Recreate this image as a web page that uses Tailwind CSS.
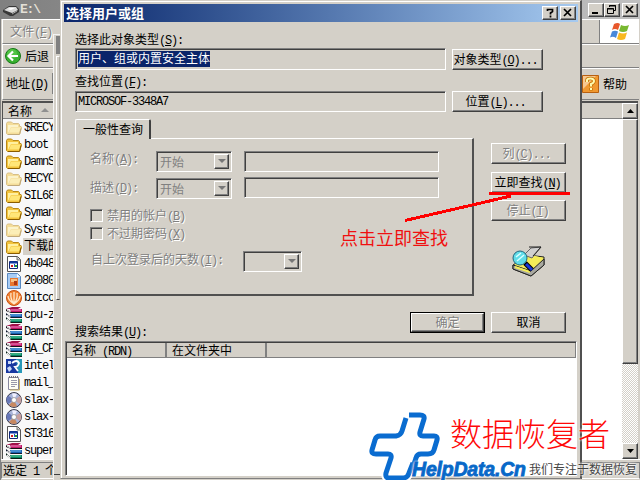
<!DOCTYPE html>
<html lang="zh-CN">
<head>
    <meta charset="UTF-8">
    <meta name="viewport" content="width=device-width, initial-scale=1.0">
    <title>选择用户或组</title>
    <script src="https://cdn.jsdelivr.net/npm/@tailwindcss/browser@4"></script>
    <style>
        body { font-family: "Noto Sans CJK SC", sans-serif; font-size: 12px; line-height: 14px; }
        /* half-width latin: 6px per character */
        i { font-family: "Liberation Mono", monospace; font-style: normal; letter-spacing: -1.2px; white-space: pre; }
        u { text-underline-offset: 1px; }
        .raised { border: 1px solid; border-color: #fff #404040 #404040 #fff; box-shadow: inset -1px -1px #808080; background: #d4d0c8; }
        .sunken { border: 1px solid; border-color: #808080 #fff #fff #808080; box-shadow: inset 1px 1px #404040; }
        .off { color: #808080; text-shadow: 1px 1px #fff; }
        /* dithered scrollbar track */
        .track { background: repeating-conic-gradient(#fff 0 25%, #d4d0c8 0 50%) 0 0 / 2px 2px; }
    </style>
</head>
<body class="w-[640px] h-[480px] overflow-hidden relative bg-[#d4d0c8] text-black">

    <!-- icon set -->
    <svg class="hidden">
        <symbol id="folder" viewBox="0 0 16 16">
            <path d="M.5 3.500 1.500 2h4L7 3.500h5.500l1 1v2H15l.5 1-1.500 6-1 1H1.500l-1-1z" fill="#f2c33c" stroke="#b88818"/>
            <path d="M2 5h10v2H5l-3 6z" fill="#fff0a0"/>
            <path d="M5 7.500h9.500l-1.500 5H3z" fill="#ffe678"/>
            <path d="M2 14.500h11.500l1.500-6" fill="none" stroke="#8a5c00"/>
        </symbol>
        <symbol id="rar" viewBox="0 0 16 16">
            <path d="M0 2 6 0h9l-3 2z" fill="#a01048"/><path d="M4 2h12v3H5z" fill="#c01868"/><path d="M5 3h10" stroke="#f08cc0"/>
            <path d="M0 2 5 5h11v1H5L0 4z" fill="#181018"/>
            <path d="M4 7h12v3H5z" fill="#1860b0"/><path d="M5 8h10" stroke="#70b8f0"/><path d="M0 6l5 4h11v1H5L0 8z" fill="#101830"/>
            <path d="M4 12h12v3H5z" fill="#088060"/><path d="M5 13h10" stroke="#60d8a0"/><path d="M0 10l5 5h11v1H5l-5-4z" fill="#082018"/>
            <path d="M1 3l3 2M1 8l3 2M1 12l3 3" stroke="#eee"/>
        </symbol>
        <symbol id="app" viewBox="0 0 16 16">
            <path d="M1.500.5h10l3 3v12h-13z" fill="#fff" stroke="#555"/><path d="M11 1v3h3" fill="#bbb" stroke="#777"/>
            <path d="M3.500 5.500h8v7h-8z" fill="#fff" stroke="#102878"/><path d="M4 6.500h7" stroke="#1038a0" stroke-width="2"/>
            <path d="M5 9h2v2H5z" fill="#d82020"/><path d="M8 8h1v3H8z" fill="#2050d0"/><path d="M9 9h2v2H9z" fill="#20a020"/>
        </symbol>
        <symbol id="disc" viewBox="0 0 16 16">
            <circle cx="8" cy="8" r="7.400" fill="#a8b4d8" stroke="#303040"/>
            <path d="M8 8 2 3.500A7 7 0 0 0 2 12z" fill="#6878b8"/><path d="M8 8 3 13a7 7 0 0 0 8 1z" fill="#c88860"/>
            <path d="M8 8 14 4a7 7 0 0 1 0 8z" fill="#c8a0a0"/><path d="M8 8 6 1.500a7 7 0 0 1 5 .5z" fill="#f0f0ff"/>
            <circle cx="8" cy="8" r="2.500" fill="#fff" stroke="#888" stroke-width=".7"/>
        </symbol>
    </svg>

    <!-- explorer window -->
    <div class="w-[640px] h-[480px] flex flex-col border-l border-[#808080]">
        <div class="h-[19px] flex items-center justify-between pl-[1px] pr-[2px] bg-linear-to-r from-[#808080] to-[#c0c0c0]">
            <div class="flex items-center text-[#e4e0d8] font-bold">
                <svg class="w-[17px] h-[14px]" viewBox="0 0 17 14"><path d="M1 7 7 3h7l3 3v3l-6 4H8L1 9z" fill="#383838"/><path d="M2 7 7 4h7l2 3-6 3z" fill="#d8d8d8"/><path d="M5 6l4-1h4l-4 2z" fill="#fff"/><path d="M10 11l5-3" stroke="#aaa"/></svg>
                <i class="text-[13px] ml-[1px]">E:\</i>
            </div>
            <div class="flex">
                <div class="raised w-[16px] h-[14px]"><svg width="14" height="12"><path d="M3 8h6v2H3z"/></svg></div>
                <div class="raised w-[16px] h-[14px]"><svg width="14" height="12"><path d="M4.500 3V1.500h6v5H9M4 2h7M2.500 4.500h6v5h-6zM2 5h7" fill="none" stroke="#000"/></svg></div>
                <div class="raised w-[16px] h-[14px] ml-[2px]"><svg width="14" height="12"><path d="M3 2l7 7M10 2l-7 7" stroke="#000" stroke-width="1.700"/></svg></div>
            </div>
        </div>
        <div class="h-[25px] flex justify-between border-t border-b border-t-white border-b-[#808080] ml-[1px] mr-[1px] border-l border-l-white">
            <div class="off pl-[7px] pt-[4px]">文件<i>(<u>F</u>)</i></div>
            <div class="w-[40px] border-l border-[#808080] bg-white flex justify-center items-center">
                <svg class="w-[20px] h-[19px]" viewBox="0 0 20 19"><path d="M4 2q4-2 6 0L8 8Q5 6 2 8z" fill="#e8582c"/><path d="M11 3q4 2 8 0l-2 6q-4 2-8 0z" fill="#78b830"/><path d="M2 9.500Q5 8 8 9.500L6 16q-3-2-6-.5z" fill="#4888d8"/><path d="M9 10.500q4 2 8 0L15 17q-4 2-8 0z" fill="#f8b820"/></svg>
            </div>
        </div>
        <div class="h-[24px] mx-[1px] flex items-center pl-[2px] border-t border-b border-t-white border-b-[#808080] border-l border-l-white">
            <svg class="w-[16px] h-[16px]" viewBox="0 0 16 16"><circle cx="8" cy="8" r="7.500" fill="#38b030" stroke="#187818"/><circle cx="7" cy="6" r="5" fill="#60d050" opacity=".6"/><path d="M8 3.500 3.500 8 8 12.500M4 8h9" fill="none" stroke="#fff" stroke-width="2.200"/></svg>
            <span class="ml-[4px]">后退</span>
        </div>
        <div class="h-[32px] mx-[1px] flex items-center justify-between border-t border-b border-t-white border-b-[#808080] border-l border-l-white pb-[1px]">
            <div class="flex items-center pl-[3px]"><span>地址<i>(<u>D</u>)</i></span><div class="ml-[4px] w-[3px] h-[21px] bg-[#808080]"></div></div>
            <div class="flex items-center pr-[12px]">
                <svg class="w-[17px] h-[18px] mr-[4px]" viewBox="0 0 17 18"><path d="M.5.5h16v17H.5z" fill="#f09830" stroke="#b86010"/><path d="M1 1h13L1 14z" fill="#f8c890"/><path d="M5 7V5q0-1.500 3.500-1.500T12 6Q12 8 9 9v2.500M9 13v2.500" fill="none" stroke="#c07000" stroke-width="3.500"/><path d="M5 7V5q0-1.500 3.500-1.500T12 6Q12 8 9 9v2.500M9 13v2" fill="none" stroke="#fffbb0" stroke-width="2"/></svg>
                帮助
            </div>
        </div>
        <div class="flex-1 mt-[1px] ml-[1px] mr-[2px] flex justify-between bg-white border-t-2 border-l border-[#505050]">
            <div class="w-[51px]">
                <div class="h-[16px] bg-[#d4d0c8] border-b border-[#808080] flex items-center pl-[5px]">名称
                    <svg class="ml-[9px]" width="8" height="5"><path d="M0 4 4 0l4 4z" fill="#909090"/></svg>
                </div>
                <ul class="whitespace-nowrap overflow-hidden bg-[#f8f8f8] [&>li]:h-[17px] [&>li]:flex [&>li]:items-center [&>li]:pl-[3px] [&>li]:gap-[2px] [&_svg]:w-[16px] [&_svg]:h-[16px] [&_svg]:shrink-0">
                    <li><svg class="opacity-50"><use href="#folder"/></svg><i>$RECY</i></li>
                    <li><svg><use href="#folder"/></svg><i>boot</i></li>
                    <li><svg><use href="#folder"/></svg><i>DamnS</i></li>
                    <li><svg class="opacity-50"><use href="#folder"/></svg><i>RECYC</i></li>
                    <li><svg><use href="#folder"/></svg><i>SIL68</i></li>
                    <li><svg><use href="#folder"/></svg><i>Syman</i></li>
                    <li><svg class="opacity-50"><use href="#folder"/></svg><i>Syste</i></li>
                    <li><svg><use href="#folder"/></svg><span class="bg-[#d4d0c8] h-full -ml-[1px] pl-[1px]">下载的</span></li>
                    <li><svg><use href="#app"/></svg><i>4b048</i></li>
                    <li><svg viewBox="0 0 16 16"><path d="M1.500.5h10l3 3v12h-13z" fill="#a8ccf4" stroke="#5888c0"/><path d="M11 1v3h3" fill="#fff"/><path d="M4 5h8v8H4z" fill="#e87830"/><path d="M5 6h6v3H5z" fill="#f8c080"/><path d="M8 8h3v4H8z" fill="#b03810"/></svg><i>20080</i></li>
                    <li><svg viewBox="0 0 16 16"><circle cx="8" cy="8" r="7.500" fill="#f08030" stroke="#c85010"/><path d="M8 14V2M8 14Q4 9 5 3M8 14q4-5 3-11M8 14Q2 10 2 6M8 14q6-4 6-8" fill="none" stroke="#ffe8c8" stroke-width="1.300"/></svg><i>bitco</i></li>
                    <li><svg><use href="#rar"/></svg><i>cpu-z</i></li>
                    <li><svg><use href="#rar"/></svg><i>DamnS</i></li>
                    <li><svg><use href="#rar"/></svg><i>HA_CP</i></li>
                    <li><svg viewBox="0 0 16 16"><path d="M0 1h16v14H0z" fill="#1838a0"/><path d="M10 1h6v14h-4z" fill="#2898b8"/><path d="M2 3h3v3H2zM1 10l3-2 2 3-3 3z" fill="#c8d8f8"/><path d="M6 5q5-4 7 0-1 4-4 4l3 4" fill="none" stroke="#fff" stroke-width="1.800"/></svg><i>intel</i></li>
                    <li><svg viewBox="0 0 16 16"><path d="M2.500 2.500h10v12h-10z" fill="#fffff4" stroke="#8888a0"/><path d="M3 2h10" stroke="#777" stroke-width="2" stroke-dasharray="1 1"/><path d="M5 5.500h6M5 7.500h6M5 9.500h6M5 11.500h4" stroke="#99a"/><path d="M13.500 4v11H4" fill="none" stroke="#c8b060"/></svg><i>mail_</i></li>
                    <li><svg><use href="#disc"/></svg><i>slax-</i></li>
                    <li><svg><use href="#disc"/></svg><i>slax-</i></li>
                    <li><svg><use href="#app"/></svg><i>ST316</i></li>
                    <li><svg><use href="#rar"/></svg><i>super</i></li>
                </ul>
            </div>
            <div class="flex">
                <div class="w-[41px] h-[16px] bg-[#d4d0c8] border-b border-[#808080]"></div>
                <div class="track w-[16px] flex flex-col">
                    <div class="raised h-[16px] flex items-center justify-center"><svg width="7" height="4"><path d="M0 4 3.500 0 7 4z"/></svg></div>
                    <div class="raised h-[245px]"></div>
                    <div class="flex-1"></div>
                    <div class="raised h-[16px] flex items-center justify-center"><svg width="7" height="4"><path d="M0 0h7L3.500 4z"/></svg></div>
                </div>
            </div>
        </div>
        <div class="h-[21px] pt-[2px] border-t border-white">
            <div class="h-[17px] border border-[#808080] border-b-white pl-[1px]">选定<i> 1 </i>个</div>
        </div>
    </div>

    <!-- edge of the window behind the dialog -->
    <div class="absolute left-[53px] top-[34px] w-[8px] h-[446px] bg-[#d4d0c8] border-l border-t border-[#f4f4f4] pl-[2px] pt-[1px]">
        <div class="h-[18px] bg-[#808080]"></div>
        <div class="mt-[2px] h-[244px] w-[4px] border-l border-t border-white border-r border-r-[#b0aca4] border-b border-b-[#404040]"></div>
        <div class="mt-[174px] -ml-[2px] h-px bg-[#404040]"></div>
    </div>

    <!-- dialog -->
    <div class="absolute left-[60px] top-0 w-[522px] h-[479px] bg-[#d4d0c8] border-t border-l border-[#d4d0c8] border-r-2 border-r-[#505050] border-b border-b-[#808080]">
        <div class="h-full border-t border-l border-white flex flex-col">
            <div class="mt-[2px] mx-[2px] h-[18px] shrink-0 flex items-center pl-[2px] pr-[2px] bg-linear-to-r from-[#0a246a] to-[#a6caf0] text-white font-bold text-[13px]">
                选择用户或组
                <div class="raised ml-auto w-[16px] h-[14px]"><svg width="14" height="12"><path d="M4.500 4V2.500h5v2l-2 1.500v1.500M7.500 8.500v2" fill="none" stroke="#000" stroke-width="1.700"/></svg></div>
                <div class="raised ml-[2px] w-[16px] h-[14px]"><svg width="14" height="12"><path d="M3 2l7 7M10 2l-7 7" stroke="#000" stroke-width="1.700"/></svg></div>
            </div>

            <div class="pl-[13px] pt-[10px]">
                <div class="h-[16px]">选择此对象类型<i>(<u>S</u>):</i></div>
                <div class="flex items-center gap-[6px]">
                    <div class="sunken w-[371px] h-[22px] p-[2px]"><span class="block w-[132px] h-[16px] leading-[14px] bg-[#0a246a] text-white whitespace-nowrap">用户、组或内置安全主体</span></div>
                    <div class="raised w-[91px] h-[21px] text-center pt-[2px] pr-[4px]">对象类型<i>(<u>O</u>)...</i></div>
                </div>
                <div class="h-[21px] pt-[4px]">查找位置<i>(<u>F</u>):</i></div>
                <div class="flex items-center gap-[6px]">
                    <div class="sunken w-[371px] h-[21px] pl-[2px] pt-px"><i>MICROSOF-3348A7</i></div>
                    <div class="raised w-[91px] h-[21px] text-center pt-[2px] pr-[4px]">位置<i>(<u>L</u>)...</i></div>
                </div>
            </div>

            <div class="flex pl-[13px] pt-[7px] h-[185px] shrink-0">
                <div class="w-[399px]">
                    <div class="relative z-10 w-[76px] h-[20px] -mb-px bg-[#d4d0c8] rounded-t-[2px] border-t border-l border-white border-r-2 border-r-[#404040] pl-[7px] pt-[2px]">一般性查询</div>
                    <div class="h-[158px] border-t border-l border-white border-r-2 border-b-2 border-r-[#505050] border-b-[#505050] pl-[14px] pt-[12px]">
                        <div class="flex h-[26px] items-start">
                            <span class="off w-[66px]">名称<i>(<u>A</u>):</i></span>
                            <div class="sunken w-[76px] h-[21px] flex items-center justify-between pl-[3px] p-[2px] text-[#808080]">开始<div class="raised w-[15px] h-[15px] flex items-center justify-center"><svg width="8" height="5"><path d="M0 0h8L4 4z" fill="#777"/></svg></div></div>
                            <div class="sunken w-[195px] h-[21px] ml-[12px]"></div>
                        </div>
                        <div class="flex h-[32px] items-start">
                            <span class="off w-[66px] pt-[3px]">描述<i>(<u>D</u>):</i></span>
                            <div class="sunken w-[76px] h-[21px] mt-[1px] flex items-center justify-between pl-[3px] p-[2px] text-[#808080]">开始<div class="raised w-[15px] h-[15px] flex items-center justify-center"><svg width="8" height="5"><path d="M0 0h8L4 4z" fill="#777"/></svg></div></div>
                            <div class="sunken w-[195px] h-[21px] ml-[12px]"></div>
                        </div>
                        <div class="off flex h-[18px] items-start leading-[12px]"><div class="sunken w-[13px] h-[13px] mr-[4px]"></div><span>禁用的帐户<i>(<u>B</u>)</i></span></div>
                        <div class="off flex h-[24px] items-start leading-[12px]"><div class="sunken w-[13px] h-[13px] mr-[4px]"></div><span>不过期密码<i>(<u>X</u>)</i></span></div>
                        <div class="flex items-center">
                            <span class="off w-[153px] pl-[1px] pb-[3px]">自上次登录后的天数<i>(<u>I</u>):</i></span>
                            <div class="sunken w-[59px] h-[21px] flex items-center justify-end p-[2px]"><div class="raised w-[15px] h-[15px] flex items-center justify-center"><svg width="8" height="5"><path d="M0 0h8L4 4z" fill="#777"/></svg></div></div>
                        </div>
                    </div>
                </div>
                <div class="w-[75px] ml-[17px] pt-[24px] flex flex-col items-center">
                    <div class="raised off w-full h-[21px] shrink-0 text-center pt-[2px] pr-[4px]">列<i>(<u>C</u>)...</i></div>
                    <div class="raised w-full h-[21px] shrink-0 mt-[8px] text-center pt-[2px] pr-[2px]">立即查找<i>(<u>N</u>)</i></div>
                    <div class="raised off w-full h-[21px] shrink-0 mt-[7px] text-center pt-[2px] pr-[2px]">停止<i>(<u>T</u>)</i></div>
                    <svg class="w-[33px] h-[31px] mt-[25px] shrink-0" viewBox="0 0 33 31">
                        <path d="M1 19 16 9l16 2v8L19 30 1 23z" fill="#f0e860" stroke="#222"/>
                        <path d="M1 19l18 6 13-12v6L19 30 1 23z" fill="#a8a8a0" stroke="#222"/>
                        <path d="M3 18l13-10 15 4-12 11z" fill="#f4ec58"/>
                        <path d="M3 21l15 5" stroke="#f4ec58" stroke-width="2"/>
                        <path d="M12 9 19 2l10-1-9 11z" fill="#d0d0d0" stroke="#666"/><path d="M17 1h12l-8 9" fill="none" stroke="#222"/>
                        <path d="M13 17l7 7" stroke="#000" stroke-width="5"/><path d="M14 18l6 6" stroke="#1838d8" stroke-width="3"/>
                        <circle cx="8" cy="12" r="7" fill="#60dce8" stroke="#206880"/><path d="M4 11l5-4M5 15l7-6" stroke="#d8ffff" stroke-width="1.500"/>
                    </svg>
                </div>
            </div>

            <div class="h-[44px] shrink-0 flex pl-[13px]">
                <div class="w-[335px] pt-[27px]">搜索结果<i>(<u>U</u>):</i></div>
                <div class="mt-[15px] w-[75px] h-[21px] border border-black"><div class="raised off h-full text-center pt-px">确定</div></div>
                <div class="raised mt-[15px] ml-[6px] w-[75px] h-[21px] text-center pt-[2px]">取消</div>
            </div>

            <div class="ml-[3px] mr-[3px] mb-[2px] flex-1 sunken bg-white pt-px pl-px">
                <div class="h-[15px] flex bg-[#d4d0c8] border-b border-[#808080] [&>div]:border-r [&>div]:border-[#808080]">
                    <div class="w-[99px] pl-[5px]">名称<i> (RDN)</i></div>
                    <div class="w-[100px] pl-[5px] border-l border-l-white">在文件夹中</div>
                    <div class="flex-1 border-l border-l-white"></div>
                </div>
            </div>
        </div>
    </div>

    <!-- annotation -->
    <svg class="absolute left-0 top-0 w-[640px] h-[480px]" viewBox="0 0 640 480" shape-rendering="crispEdges">
        <path d="M489 193.500h81M405 220.500 511 196" stroke="#f00" stroke-width="3" fill="none"/>
    </svg>
    <div class="absolute left-[340px] top-[227px] text-[18px] leading-[20px] text-[#f01010]">点击立即查找</div>

    <!-- watermark -->
    <svg class="absolute left-[362px] top-[404px] w-[90px] h-[76px]" viewBox="362 404 90 76" fill="none" stroke-linejoin="round">
        <path d="M406 418 402 431Q401 435 396 436H380Q376 436 375 440L372 450Q371 454 376 454H388Q392 454 391 458L386 473Q385 478 389 478H404Q408 477 409 473L413 463M409 415H420Q425 415 424 419L420 432Q419 436 423 436H434Q438 436 437 440L434 450Q433 454 428 454H421Q417 454 416 458L414 464" stroke="#fff" stroke-width="9"/>
        <path d="M406 418 402 431Q401 435 396 436H380Q376 436 375 440L372 450Q371 454 376 454H388Q392 454 391 458L386 473Q385 478 389 478H404Q408 477 409 473L413 463M409 415H420Q425 415 424 419L420 432Q419 436 423 436H434Q438 436 437 440L434 450Q433 454 428 454H421Q417 454 416 458L414 464" stroke="#0a6cd0" stroke-width="5"/>
    </svg>
    <div class="absolute left-[412px] top-[458px] font-['Liberation_Sans'] font-bold italic text-[19.5px] tracking-[-0.2px] leading-[22px] text-[#0868c8] [-webkit-text-stroke:0.8px_#0868c8] [text-shadow:0_0_3px_#fff,0_0_3px_#fff,0_0_2px_#fff]">HelpData.Cn</div>
    <div class="absolute left-[450px] top-[412px] font-light text-[32px] leading-[40px] text-[#ff0808] whitespace-nowrap [text-shadow:0_0_3px_#fff,0_0_3px_#fff]">数据恢复者</div>
    <div class="absolute left-[529px] top-[461px] text-[12px] leading-[15px] text-[#444] whitespace-nowrap [text-shadow:0_0_2px_#fff,0_0_3px_#fff,0_0_3px_#fff]">我们专注于数据恢复</div>
</body>
</html>
